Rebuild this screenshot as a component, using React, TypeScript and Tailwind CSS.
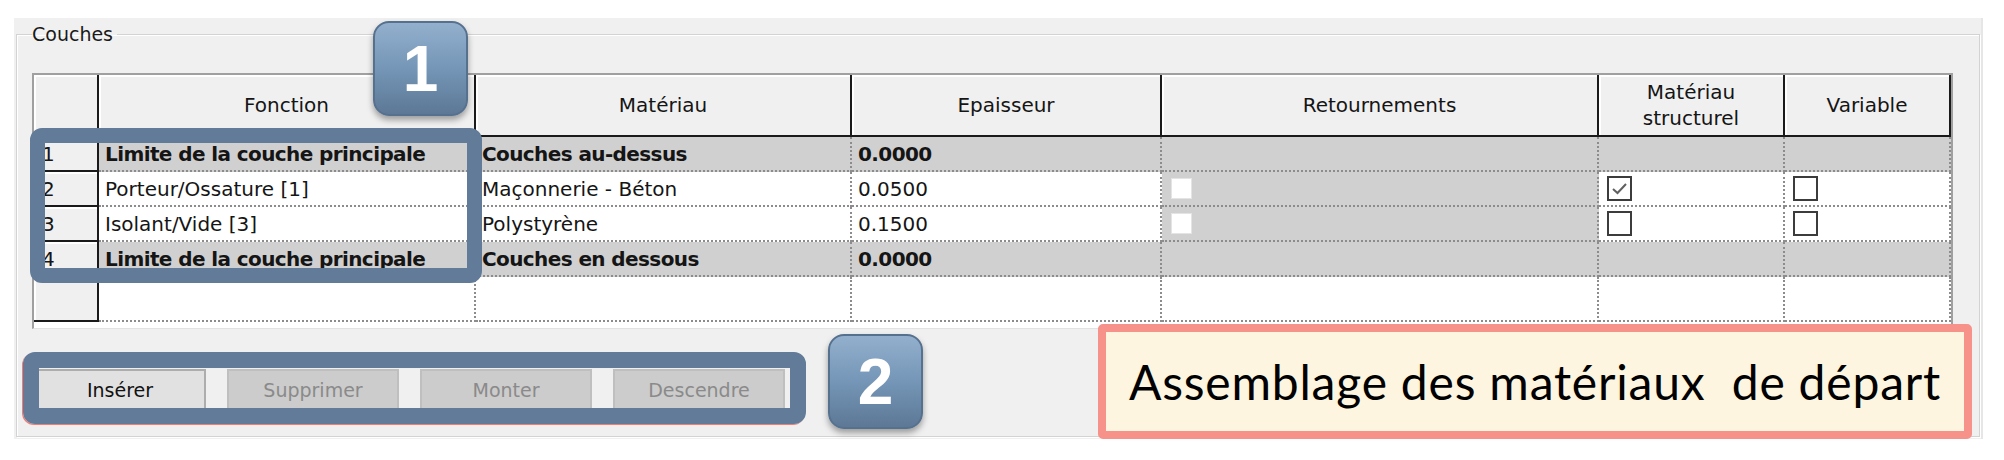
import { ReactNode } from "react";

type Row = {
  n: string;
  fonction: string;
  materiau: string;
  epaisseur: string;
  boundary: boolean;
  structurel?: boolean;
};

const rows: Row[] = [
  { n: "1", fonction: "Limite de la couche principale", materiau: "Couches au-dessus", epaisseur: "0.0000", boundary: true },
  { n: "2", fonction: "Porteur/Ossature [1]", materiau: "Maçonnerie - Béton", epaisseur: "0.0500", boundary: false, structurel: true },
  { n: "3", fonction: "Isolant/Vide [3]", materiau: "Polystyrène", epaisseur: "0.1500", boundary: false, structurel: false },
  { n: "4", fonction: "Limite de la couche principale", materiau: "Couches en dessous", epaisseur: "0.0000", boundary: true },
];

const grid = "grid grid-cols-[65px_377px_376px_310px_437px_186px_166px]";

function HeadCell({ children }: { children?: ReactNode }) {
  return (
    <div className="h-[62px] flex items-center justify-center text-center leading-[26px] bg-[#f0f0f0] border-r-2 border-b-2 border-[#1a1a1a] shadow-[inset_2px_2px_0_#fff]">
      {children}
    </div>
  );
}

function RowHead({ n, tall }: { n?: string; tall?: boolean }) {
  return (
    <div
      className={`${tall ? "h-[45px]" : "h-[35px]"} flex items-center pl-[8px] bg-[#f0f0f0] border-r-2 border-b-2 border-[#1a1a1a] shadow-[inset_2px_2px_0_#fff]`}
    >
      {n}
    </div>
  );
}

function Cell({ children, gray, bold, tall }: { children?: ReactNode; gray?: boolean; bold?: boolean; tall?: boolean }) {
  return (
    <div
      className={`${tall ? "h-[45px]" : "h-[35px]"} flex items-center px-[6px] whitespace-nowrap border-r-2 border-b-2 border-dotted border-[#8c8c8c] ${gray ? "bg-[#d0d0d0]" : "bg-white"} ${bold ? "font-bold tracking-[-0.6px]" : ""}`}
    >
      {children}
    </div>
  );
}

function Check({ checked }: { checked?: boolean }) {
  return (
    <div className="w-[25px] h-[25px] border-2 border-[#3c3c3c] bg-white ml-[2px]">
      {checked && (
        <svg viewBox="0 0 21 21" className="w-full h-full">
          <polyline points="4,11 8.5,15 17,6" fill="none" stroke="#606060" strokeWidth="2" />
        </svg>
      )}
    </div>
  );
}

function Badge({ label }: { label: string }) {
  return (
    <div className="w-[95px] h-[95px] rounded-[16px] border-2 border-[#56718e] bg-gradient-to-b from-[#93afcd] via-[#7596b7] to-[#5d7896] shadow-[0_4px_6px_rgba(0,0,0,0.35)] flex items-center justify-center text-white font-['Liberation_Sans',Arial,sans-serif] font-bold text-[64px] leading-none">
      {label}
    </div>
  );
}

function WinButton({ label, enabled }: { label: string; enabled?: boolean }) {
  return (
    <div
      className={`w-[172px] h-[42px] flex items-center justify-center text-[19px] border-2 ${enabled ? "bg-[#e1e1e1] border-[#adadad] text-[#111]" : "bg-[#cccccc] border-[#bfbfbf] text-[#8a8a8a]"}`}
    >
      {label}
    </div>
  );
}

export default function App() {
  return (
    <div className="relative w-[2004px] h-[460px] bg-white overflow-hidden font-['DejaVu_Sans',sans-serif] text-[20px] text-[#151515]">
      <div className="ml-[14px] mt-[18px] w-[1969px] h-[421px] bg-[#f0f0f0] pt-[5px] pl-[2px] border-r-2 border-[#e6e6e6]">
        <fieldset className="w-[1964px] h-[414px] border border-[#d3d3d3] shadow-[inset_1px_1px_0_#fff,1px_1px_0_#fff] pl-[15px] pr-0">
          <legend className="text-[19px] leading-[22px] pr-[4px] text-[#1a1a1a]">Couches</legend>

          <div className="mt-[28px] w-[1921px] bg-white border-t-2 border-l-2 border-r-2 border-[#a0a0a0] border-b border-b-[#e2e2e2] pb-[6px]">
            <div className={grid}>
              <HeadCell />
              <HeadCell>Fonction</HeadCell>
              <HeadCell>Matériau</HeadCell>
              <HeadCell>Epaisseur</HeadCell>
              <HeadCell>Retournements</HeadCell>
              <HeadCell>
                Matériau
                <br />
                structurel
              </HeadCell>
              <HeadCell>Variable</HeadCell>

              {rows.map((r) => (
                <div key={r.n} className="contents">
                  <RowHead n={r.n} />
                  <Cell gray={r.boundary} bold={r.boundary}>{r.fonction}</Cell>
                  <Cell gray={r.boundary} bold={r.boundary}>{r.materiau}</Cell>
                  <Cell gray={r.boundary} bold={r.boundary}>{r.epaisseur}</Cell>
                  <Cell gray>
                    {!r.boundary && <div className="ml-[3px] w-[21px] h-[21px] bg-white border border-[#e4e4e4]" />}
                  </Cell>
                  <Cell gray={r.boundary}>{!r.boundary && <Check checked={r.structurel} />}</Cell>
                  <Cell gray={r.boundary}>{!r.boundary && <Check />}</Cell>
                </div>
              ))}

              <RowHead tall />
              <Cell tall />
              <Cell tall />
              <Cell tall />
              <Cell tall />
              <Cell tall />
              <Cell tall />
            </div>
          </div>

          <div className="mt-[40px] ml-[2px] flex gap-[21px]">
            <WinButton label="Insérer" enabled />
            <WinButton label="Supprimer" />
            <WinButton label="Monter" />
            <WinButton label="Descendre" />
          </div>
        </fieldset>
      </div>

      {/* annotations */}
      <div className="absolute left-[373px] top-[21px]">
        <Badge label="1" />
      </div>
      <div className="absolute left-[30px] top-[128px] w-[452px] h-[155px] border-[15px] border-[#617b98] rounded-[12px]" />

      <div className="absolute left-[23px] top-[352px] w-[783px] h-[72px] border-[16px] border-[#617b98] rounded-[12px] shadow-[-1px_1px_0_#f27c74]" />
      <div className="absolute left-[828px] top-[334px]">
        <Badge label="2" />
      </div>

      <div className="absolute left-[1098px] top-[324px] w-[874px] h-[115px] border-[8px] border-[#f6928a] bg-[#fdf5df] rounded-[5px] flex items-center justify-center font-['Lato',sans-serif] text-[48px] tracking-[0.8px] text-black whitespace-pre">
        Assemblage des matériaux  de départ
      </div>
    </div>
  );
}
